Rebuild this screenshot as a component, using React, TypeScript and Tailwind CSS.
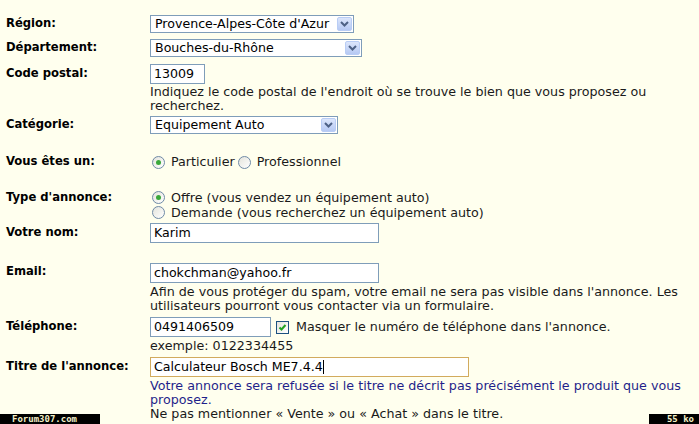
import React from "react";

const font = { fontFamily: '"DejaVu Sans", Verdana, sans-serif' };

function Chevron() {
  return (
    <svg width="9" height="6" viewBox="0 0 9 6">
      <path d="M1 1 L4.5 4.5 L8 1" stroke="#4d6185" strokeWidth="2" fill="none" />
    </svg>
  );
}

function Select({ value, w }: { value: string; w: string }) {
  return (
    <div className={`${w} h-[18px] border border-[#7f9db9] bg-white flex items-center justify-between pl-[4px] pr-[1px]`}>
      <span className="text-[12.6px] leading-[16px] text-black whitespace-nowrap">{value}</span>
      <span className="w-[15px] h-[14px] rounded-[2px] border border-[#b9cdf5] bg-gradient-to-b from-[#dce6fb] to-[#b6c9f3] flex items-center justify-center">
        <Chevron />
      </span>
    </div>
  );
}

function Input({ value, w, focus, caret }: { value: string; w: string; focus?: boolean; caret?: boolean }) {
  return (
    <div className={`${w} h-[20px] border ${focus ? "border-[#d2ab5e]" : "border-[#7f9db9]"} bg-white flex items-center pl-[3px]`}>
      <span className="text-[12.6px] leading-[16px] text-black whitespace-nowrap">{value}</span>
      {caret && <span className="w-[1px] h-[14px] bg-black" />}
    </div>
  );
}

function Radio({ checked }: { checked?: boolean }) {
  return (
    <span className="w-[13px] h-[13px] rounded-full border border-[#6f8aa6] bg-gradient-to-br from-[#e4e4dc] to-white flex items-center justify-center shrink-0">
      {checked && <span className="w-[5px] h-[5px] rounded-full bg-[#3aa83a]" />}
    </span>
  );
}

function Checkbox() {
  return (
    <span className="w-[13px] h-[13px] border border-[#1c5180] bg-gradient-to-br from-[#e4e4dc] to-white flex items-center justify-center shrink-0">
      <svg width="9" height="9" viewBox="0 0 9 9">
        <path d="M1.5 4.5 L3.5 6.5 L7.5 2" stroke="#21a121" strokeWidth="2" fill="none" />
      </svg>
    </span>
  );
}

function Label({ children, h = "h-[20px]" }: { children: React.ReactNode; h?: string }) {
  return (
    <div className={`w-[144px] shrink-0 ${h} flex items-center text-[11.6px] font-bold text-black whitespace-nowrap`}>
      {children}
    </div>
  );
}

export default function App() {
  return (
    <div style={font} className="relative w-[699px] h-[424px] overflow-hidden bg-[#ffffee] text-[#1a1a1a] pl-[6px] pt-[15px]">
      <div className="flex flex-col">
        <div className="flex h-[24px]">
          <Label h="h-[18px]">Région:</Label>
          <Select value="Provence-Alpes-Côte d'Azur" w="w-[204px]" />
        </div>
        <div className="flex h-[25px]">
          <Label h="h-[18px]">Département:</Label>
          <Select value="Bouches-du-Rhône" w="w-[212px]" />
        </div>
        <div className="flex h-[52px]">
          <Label>Code postal:</Label>
          <div className="flex flex-col">
            <Input value="13009" w="w-[55px]" />
            <div className="mt-[1px] text-[12.7px] leading-[14px] whitespace-nowrap">
              Indiquez le code postal de l'endroit où se trouve le bien que vous proposez ou
              <br />
              recherchez.
            </div>
          </div>
        </div>
        <div className="flex h-[36px]">
          <Label h="h-[18px]">Catégorie:</Label>
          <Select value="Equipement Auto" w="w-[188px]" />
        </div>
        <div className="flex h-[38px]">
          <Label>Vous êtes un:</Label>
          <div className="flex items-center h-[20px] text-[12.7px] whitespace-nowrap">
            <span className="ml-[2px]"><Radio checked /></span>
            <span className="ml-[6px]">Particulier</span>
            <span className="ml-[3px]"><Radio /></span>
            <span className="ml-[6px]">Professionnel</span>
          </div>
        </div>
        <div className="flex h-[33px]">
          <Label h="h-[15px]">Type d'annonce:</Label>
          <div className="flex flex-col text-[12.7px] leading-[15px] whitespace-nowrap">
            <div className="flex items-center h-[15px]">
              <span className="ml-[2px]"><Radio checked /></span>
              <span className="ml-[6px]">Offre (vous vendez un équipement auto)</span>
            </div>
            <div className="flex items-center h-[15px]">
              <span className="ml-[2px]"><Radio /></span>
              <span className="ml-[6px]">Demande (vous recherchez un équipement auto)</span>
            </div>
          </div>
        </div>
        <div className="flex h-[40px]">
          <Label>Votre nom:</Label>
          <Input value="Karim" w="w-[229px]" />
        </div>
        <div className="flex h-[54px]">
          <Label h="h-[17px]">Email:</Label>
          <div className="flex flex-col">
            <Input value="chokchman@yahoo.fr" w="w-[229px]" />
            <div className="mt-[2px] text-[12.7px] leading-[14px] whitespace-nowrap">
              Afin de vous protéger du spam, votre email ne sera pas visible dans l'annonce. Les
              <br />
              utilisateurs pourront vous contacter via un formulaire.
            </div>
          </div>
        </div>
        <div className="flex h-[40px]">
          <Label>Téléphone:</Label>
          <div className="flex flex-col">
            <div className="flex items-center">
              <Input value="0491406509" w="w-[121px]" />
              <span className="ml-[5px]"><Checkbox /></span>
              <span className="ml-[7px] text-[12.7px] whitespace-nowrap">Masquer le numéro de téléphone dans l'annonce.</span>
            </div>
            <div className="mt-[2px] text-[12.7px] leading-[14px] whitespace-nowrap">exemple: 0122334455</div>
          </div>
        </div>
        <div className="flex">
          <Label>Titre de l'annonce:</Label>
          <div className="flex flex-col">
            <Input value="Calculateur Bosch ME7.4.4" w="w-[319px]" focus caret />
            <div className="mt-[2px] text-[12.7px] leading-[14px] whitespace-nowrap text-[#1f1f8a]">
              Votre annonce sera refusée si le titre ne décrit pas précisément le produit que vous
              <br />
              proposez.
            </div>
            <div className="text-[12.7px] leading-[14px] whitespace-nowrap">
              Ne pas mentionner « Vente » ou « Achat » dans le titre.
            </div>
          </div>
        </div>
      </div>
      <div className="absolute left-0 bottom-0 w-[100px] h-[10px] bg-black flex items-center pl-[12px]">
        <span className="text-[9px] leading-[10px] font-bold text-[#f3efc8] whitespace-nowrap" style={{ fontFamily: '"DejaVu Sans Mono", monospace' }}>Forum307.com</span>
      </div>
      <div className="absolute right-0 bottom-0 w-[50px] h-[10px] bg-black flex items-center justify-end pr-[5px]">
        <span className="text-[9px] leading-[10px] font-bold text-[#f3efc8] whitespace-nowrap" style={{ fontFamily: '"DejaVu Sans Mono", monospace' }}>55 ko</span>
      </div>
    </div>
  );
}
